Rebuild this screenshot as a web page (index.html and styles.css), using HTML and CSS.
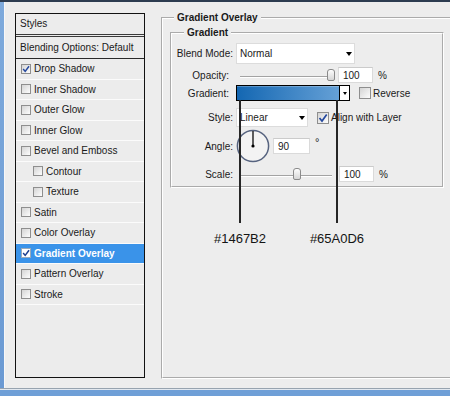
FILE: index.html
```html
<!DOCTYPE html>
<html>
<head>
<meta charset="utf-8">
<title>Layer Style - Gradient Overlay</title>
<link rel="stylesheet" href="styles.css">
</head>
<body>
<div class="screen">
  <div class="topbar"></div>
  <div class="main">
    <div class="frame-left"></div>
    <div class="dialog">
      <div class="styles-panel">
        <div class="panel-head">Styles</div>
        <div class="panel-blend">Blending Options: Default</div>
        <ul class="style-list">
          <li class="item"><span class="cb on"><svg viewBox="0 0 9 9" width="8" height="8"><path d="M1.3 4.6 L3.6 7.2 L7.9 1.4" fill="none" stroke="#24489e" stroke-width="1.7"/></svg></span>Drop Shadow</li>
          <li class="item"><span class="cb"></span>Inner Shadow</li>
          <li class="item"><span class="cb"></span>Outer Glow</li>
          <li class="item"><span class="cb"></span>Inner Glow</li>
          <li class="item"><span class="cb"></span>Bevel and Emboss</li>
          <li class="item sub"><span class="cb"></span>Contour</li>
          <li class="item sub"><span class="cb"></span>Texture</li>
          <li class="item"><span class="cb"></span>Satin</li>
          <li class="item"><span class="cb"></span>Color Overlay</li>
          <li class="item selected"><span class="cb on"><svg viewBox="0 0 9 9" width="8" height="8"><path d="M1.3 4.6 L3.6 7.2 L7.9 1.4" fill="none" stroke="#1d3f8f" stroke-width="1.7"/></svg></span>Gradient Overlay</li>
          <li class="item"><span class="cb"></span>Pattern Overlay</li>
          <li class="item"><span class="cb"></span>Stroke</li>
        </ul>
      </div>

      <fieldset class="group outer">
        <legend>Gradient Overlay</legend>
        <fieldset class="group inner">
          <legend>Gradient</legend>

          <div class="row r-blend">
            <span class="label">Blend Mode:</span>
            <div class="select select-blend"><span>Normal</span><i class="arrow"></i></div>
          </div>

          <div class="row r-opacity">
            <span class="label tight">Opacity:</span>
            <div class="slider slider-opacity"><div class="track"></div><div class="thumb thumb-opacity"></div></div>
            <div class="field field-num">100</div>
            <span class="unit">%</span>
          </div>

          <div class="row r-gradient">
            <span class="label tight">Gradient:</span>
            <div class="gradient"><div class="gradient-fill"></div><div class="gradient-btn"><i class="tri-sm"></i></div></div>
            <span class="cb big cb-reverse"></span><span class="cb-text">Reverse</span>
          </div>

          <div class="row r-style">
            <span class="label">Style:</span>
            <div class="select select-style"><span>Linear</span><i class="arrow"></i></div>
            <span class="cb big on cb-align"><svg viewBox="0 0 10 10" width="10" height="10"><path d="M1.5 5 L4 8 L8.7 1.6" fill="none" stroke="#24489e" stroke-width="1.7"/></svg></span><span class="cb-text">Align with Layer</span>
          </div>

          <div class="row r-angle">
            <span class="label">Angle:</span>
            <svg class="dial" width="34" height="34" viewBox="0 0 34 34"><circle cx="17" cy="17" r="15.6" fill="#f3f3f3" stroke="#56637f" stroke-width="1.5"/><line x1="17" y1="17" x2="17" y2="2" stroke="#1a1a1a" stroke-width="1.4"/><circle cx="17" cy="17" r="1.6" fill="#000"/></svg>
            <div class="field field-angle">90</div>
            <span class="unit deg">°</span>
          </div>

          <div class="row r-scale">
            <span class="label">Scale:</span>
            <div class="slider slider-scale"><div class="track"></div><div class="thumb thumb-scale"></div></div>
            <div class="field field-num">100</div>
            <span class="unit">%</span>
          </div>
        </fieldset>
      </fieldset>
    </div>
  </div>
  <div class="bottombar"></div>

  <div class="marker m1"><div class="mline"></div><div class="mlabel">#1467B2</div></div>
  <div class="marker m2"><div class="mline"></div><div class="mlabel">#65A0D6</div></div>
</div>
</body>
</html>
```

FILE: styles.css
```css
* { box-sizing: border-box; }
html, body { margin: 0; padding: 0; }
body {
  font-family: "Liberation Sans", Arial, sans-serif;
  font-size: 10px;
  color: #1a1a1a;
  background: #ededed;
}

.screen {
  position: relative;
  width: 450px;
  height: 396px;
  overflow: hidden;
  display: flex;
  flex-direction: column;
  background: #ededed;
}
.topbar { flex: none; height: 2px; background: #2d3c50; }
.main { flex: 1; display: flex; min-height: 0; }
.frame-left {
  flex: none;
  width: 5px;
  background: linear-gradient(#7eaadc, #6b9ad3);
  border-right: 1px solid #f7f7f7;
}
.dialog {
  flex: 1;
  min-width: 0;
  display: flex;
  align-items: flex-start;
  padding-left: 10px;
}
.bottombar {
  flex: none;
  height: 8px;
  border-top: 1px solid #97a3af;
  background: linear-gradient(#e2e8ef 0 1px, #6f9fd7 1px);
}

/* ---------- styles list ---------- */
.styles-panel {
  flex: none;
  width: 130px;
  height: 365px;
  margin-top: 11px;
  border: 1px solid #121212;
  background: #ececec;
}
.panel-head {
  height: 21px;
  line-height: 20px;
  padding-left: 4px;
  border-bottom: 1px solid #3a3a3a;
}
.panel-blend {
  margin-top: 1px;
  height: 23px;
  line-height: 21px;
  padding-left: 4px;
  border-top: 1px solid #3a3a3a;
  border-bottom: 1px solid #2a2a2a;
  white-space: nowrap;
}
.style-list { list-style: none; margin: 0; padding: 0; }
.item {
  height: 20.5px;
  display: flex;
  align-items: center;
  padding-left: 5px;
  border-bottom: 1px solid #fbfbfb;
  white-space: nowrap;
}
.item.sub { padding-left: 17px; }
.item.selected {
  background: #3a93e9;
  color: #fff;
  font-weight: bold;
}

.cb {
  flex: none;
  width: 11px;
  height: 11px;
  border: 1px solid #8e8e8e;
  background: linear-gradient(135deg, #d4d4d4, #fdfdfd);
  display: flex;
  align-items: center;
  justify-content: center;
}
.item .cb { width: 10px; height: 10px; margin-right: 3px; }
.item.sub .cb { margin-right: 3px; }
.selected .cb { background: #fff; border-color: #9ab; }
.cb.big { width: 12px; height: 12px; }
.cb-reverse { margin-left: 9px; }
.cb-align { margin-left: 9px; }
.cb-text { margin-left: 2px; white-space: nowrap; }

/* ---------- option groups ---------- */
.group {
  margin: 0;
  min-width: 0;
  border: 2px groove #ffffff;
}
.group > legend {
  font-weight: bold;
  line-height: 12px;
  padding: 0 3px;
}
.outer {
  flex: none;
  width: 300px;
  height: 367px;
  margin: 10px 0 0 16px;
  padding: 3px 0 0 7px;
}
.outer > legend { margin-left: 4px; }
.inner {
  width: 274px;
  padding: 0 0 4px 0;
}
.inner > legend { margin-left: 12px; }

.row { display: flex; align-items: center; }
.label {
  flex: none;
  width: 61px;
  margin-right: 3px;
  text-align: right;
  white-space: nowrap;
}
.label.tight { padding-right: 4px; }
.r-blend { height: 21px; margin-top: 4px; }
.r-opacity { height: 16px; margin-top: 3px; }
.r-gradient { height: 16px; margin-top: 2px; }
.r-style { height: 19px; margin-top: 7px; }
.r-angle { height: 34px; margin-top: 2px; }
.r-scale { height: 16px; margin-top: 3px; }

.select {
  flex: none;
  height: 100%;
  display: flex;
  align-items: center;
  padding-left: 3px;
  background: #fff;
  border: 1px solid #dcdcdc;
}
.select-blend { width: 119px; }
.select-style { width: 72px; }
.arrow {
  margin-left: auto;
  margin-right: 2px;
  width: 0;
  height: 0;
  border-left: 3.5px solid transparent;
  border-right: 3.5px solid transparent;
  border-top: 4px solid #000;
}

.field {
  flex: none;
  height: 16px;
  display: flex;
  align-items: center;
  padding-left: 4px;
  background: #fff;
  border: 1px solid #dadada;
  border-top-color: #cbcbcb;
}
.field-num { width: 35px; }
.field-angle { width: 37px; margin-left: 3px; }
.unit { margin-left: 5px; }
.deg { align-self: flex-start; margin-top: 7px; font-size: 11px; }

.slider { position: relative; flex: none; height: 16px; margin-right: 3px; }
.slider-opacity { width: 99px; }
.slider-scale { width: 101px; margin-right: 2px; }
.track {
  height: 2px;
  margin: 9px 4px 0 4px;
  border-top: 1px solid #a3a3a3;
  border-bottom: 1px solid #ffffff;
}
.slider-scale .track { margin-right: 5px; }
.thumb {
  position: absolute;
  top: 2px;
  width: 8px;
  height: 12px;
  border: 1px solid #8a8a8a;
  border-radius: 3px 3px 2px 2px;
  background: linear-gradient(#fdfdfd, #d6d6d6);
}
.thumb-opacity { left: 91px; }
.thumb-scale { left: 57px; }

.gradient {
  flex: none;
  width: 114px;
  height: 16px;
  display: flex;
  border: 1px solid #000;
  background: #fff;
}
.gradient-fill {
  flex: 1;
  background: linear-gradient(to right, #1467B2, #65A0D6);
  box-shadow: inset 0 1px 0 rgba(255,255,255,0.25);
}
.gradient-btn {
  flex: none;
  width: 10px;
  border-left: 1px solid #000;
  display: flex;
  align-items: center;
  justify-content: center;
}
.tri-sm {
  width: 0;
  height: 0;
  border-left: 2.5px solid transparent;
  border-right: 2.5px solid transparent;
  border-top: 3px solid #000;
}
.dial { flex: none; display: block; }

/* ---------- colour annotations (drawn over the dialog) ---------- */
.marker {
  position: absolute;
  top: 100px;
  width: 70px;
  display: flex;
  flex-direction: column;
  align-items: center;
}
.m1 { left: 205px; }
.m2 { left: 302px; }
.mline { width: 2px; height: 123px; background: #262626; }
.mlabel {
  margin-top: 8px;
  font-family: "Liberation Sans", Arial, sans-serif;
  font-size: 13px;
  line-height: 15px;
  color: #141414;
}
```
